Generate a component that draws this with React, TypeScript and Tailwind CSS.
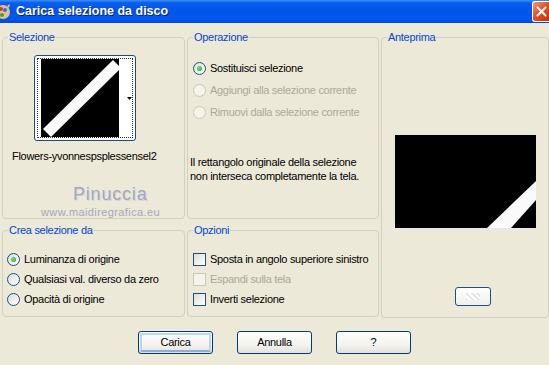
import React from "react";

function Radio({ checked, disabled, label }: { checked?: boolean; disabled?: boolean; label: string }) {
  return (
    <div className="flex items-center h-[20px] whitespace-nowrap">
      <span
        className={
          disabled
            ? "w-[13px] h-[13px] rounded-full border border-[#cac8bb] bg-[#f5f4ea] flex items-center justify-center shrink-0"
            : "w-[13px] h-[13px] rounded-full border border-[#1c5180] bg-[linear-gradient(135deg,#dcdcd7,#ffffff)] flex items-center justify-center shrink-0"
        }
      >
        {checked && <span className="w-[5px] h-[5px] rounded-full bg-[radial-gradient(circle_at_35%_35%,#7be07a,#21a121)]" />}
      </span>
      <span className={disabled ? "ml-[4px] text-[#aca899]" : "ml-[4px] text-black"}>{label}</span>
    </div>
  );
}

function Check({ disabled, label }: { disabled?: boolean; label: string }) {
  return (
    <div className="flex items-center h-[20px] whitespace-nowrap">
      <span
        className={
          disabled
            ? "w-[13px] h-[13px] border border-[#cac8bb] bg-[#f5f4ea] shrink-0"
            : "w-[13px] h-[13px] border border-[#1c5180] bg-[linear-gradient(135deg,#dcdcd7,#ffffff)] shrink-0"
        }
      />
      <span className={disabled ? "ml-[4px] text-[#aca899]" : "ml-[4px] text-black"}>{label}</span>
    </div>
  );
}

function Group({ title, className, children }: { title: string; className?: string; children?: React.ReactNode }) {
  return (
    <fieldset className={"border border-[#d0d0bf] rounded-[4px] min-w-0 " + (className ?? "")}>
      <legend className="ml-[5px] px-[1px] text-[#0046d5] leading-[13px]">{title}</legend>
      {children}
    </fieldset>
  );
}

function XPButton({ label, def }: { label: string; def?: boolean }) {
  return (
    <div className="w-[75px] h-[23px] rounded-[3px] border border-[#003c74] bg-[linear-gradient(to_bottom,#ffffff,#f4f3ee_60%,#e3e1d8)] flex items-center justify-center p-[1px]">
      <div
        className={
          def
            ? "w-full h-full rounded-[2px] border-2 border-[#bcd4f6] border-b-[#89ade4] flex items-center justify-center text-black"
            : "w-full h-full flex items-center justify-center text-black"
        }
      >
        {label}
      </div>
    </div>
  );
}

export default function App() {
  return (
    <div className="w-[549px] h-[365px] overflow-hidden bg-[#ece9d8] text-[11px] leading-[13px] tracking-[-0.3px] font-['Liberation_Sans',Arial,sans-serif]">
      {/* Title bar */}
      <div className="h-[23px] flex items-center justify-between bg-[linear-gradient(to_bottom,#3d8ff5,#0a5fee_12%,#0055ea_45%,#0058ee_80%,#0049dc)]">
        <div className="flex items-center">
          <svg width="16" height="16" viewBox="0 0 16 16" className="ml-[-5px]">
            <ellipse cx="8" cy="8" rx="7" ry="7" fill="#e8c090" />
            <circle cx="6" cy="5" r="2" fill="#d04020" />
            <circle cx="10" cy="6" r="2" fill="#3070e0" />
            <circle cx="7" cy="11" r="2" fill="#40a040" />
            <path d="M12 2 L15 0 L14 4 Z" fill="#f0d040" />
          </svg>
          <span className="ml-[5px] text-white font-bold text-[12.5px] tracking-normal [text-shadow:1px_1px_#0a1e7a]">Carica selezione da disco</span>
        </div>
        <div className="w-[17px] h-[21px] mt-[-1px] rounded-l-[3px] border border-r-0 border-white bg-[linear-gradient(135deg,#f09a7a,#e0552d_45%,#c03010)] flex items-center justify-center">
          <svg width="11" height="11" viewBox="0 0 11 11" className="ml-[1px]">
            <path d="M1.5 1.5 L9.5 9.5 M9.5 1.5 L1.5 9.5" stroke="white" strokeWidth="2" strokeLinecap="round" />
          </svg>
        </div>
      </div>

      {/* Body */}
      <div className="pt-[8px] pl-[2px]">
        <div className="grid grid-cols-[183px_192px_168px] gap-x-[2px]">
          <div className="flex flex-col gap-[5px]">
            <Group title="Selezione" className="h-[188px]">
              <div className="pl-[31px] pt-[11px]">
                <div className="w-[102px] h-[86px] rounded-[3px] border border-[#1c4b7c] bg-white relative p-[2px]">
                  <div className="w-full h-full border border-dotted border-[#333] flex items-center pl-[3px]">
                    <div className="w-[78px] h-[78px] bg-black">
                      <svg width="78" height="78" viewBox="0 0 78 78">
                        <polygon points="2,70 10,78 80,9 72,1" fill="#fafafa" />
                      </svg>
                    </div>
                  </div>
                  <svg width="5" height="3" viewBox="0 0 5 3" className="absolute right-[3px] top-[41px]">
                    <polygon points="0,0 5,0 2.5,3" fill="#000" />
                  </svg>
                </div>
              </div>
              <div className="pl-[9px] pt-[9px]">Flowers-yvonnespsplessensel2</div>
              <div className="pl-[70px] pt-[21px] text-[18px] leading-[20px] tracking-[0.8px] text-[#a3a8bd] [text-shadow:1px_1px_#d6d6e0]">Pinuccia</div>
              <div className="pl-[38px] pt-[1px] text-[11px] leading-[14px] tracking-[0.4px] text-[#a3a8bd]">www.maidiregrafica.eu</div>
            </Group>
            <Group title="Crea selezione da" className="h-[93px]">
              <div className="pl-[4px] pt-[12px] flex flex-col">
                <Radio checked label="Luminanza di origine" />
                <Radio label="Qualsiasi val. diverso da zero" />
                <Radio label="Opacità di origine" />
              </div>
            </Group>
          </div>

          <div className="flex flex-col gap-[5px]">
            <Group title="Operazione" className="h-[188px]">
              <div className="pl-[5px] pt-[14px] flex flex-col gap-[2px]">
                <Radio checked label="Sostituisci selezione" />
                <Radio disabled label="Aggiungi alla selezione corrente" />
                <Radio disabled label="Rimuovi dalla selezione corrente" />
              </div>
              <div className="pl-[2px] pt-[33px] leading-[14px]">
                Il rettangolo originale della selezione
                <br />
                non interseca completamente la tela.
              </div>
            </Group>
            <Group title="Opzioni" className="h-[93px]">
              <div className="pl-[5px] pt-[12px] flex flex-col">
                <Check label="Sposta in angolo superiore sinistro" />
                <Check disabled label="Espandi sulla tela" />
                <Check label="Inverti selezione" />
              </div>
            </Group>
          </div>

          <Group title="Anteprima" className="h-[287px]">
            <div className="flex flex-col items-center pt-[91px]">
              <div className="w-[141px] h-[93px] bg-black">
                <svg width="141" height="93" viewBox="0 0 141 93">
                  <polygon points="92,93 116,93 141,65 141,46" fill="#fafafa" />
                </svg>
              </div>
              <div className="mt-[59px] ml-[15px] w-[36px] h-[19px] rounded-[3px] border border-[#1c5180] bg-[linear-gradient(to_bottom,#ffffff,#f0efe8)] flex items-center justify-center">
                <div className="w-[14px] h-[7px] bg-[repeating-linear-gradient(45deg,#e6e6ee_0_2px,#ffffff_2px_4px)]" />
              </div>
            </div>
          </Group>
        </div>

        <div className="flex justify-center gap-[24px] mt-[13px] pr-[2px]">
          <XPButton def label="Carica" />
          <XPButton label="Annulla" />
          <XPButton label="?" />
        </div>
      </div>
    </div>
  );
}
